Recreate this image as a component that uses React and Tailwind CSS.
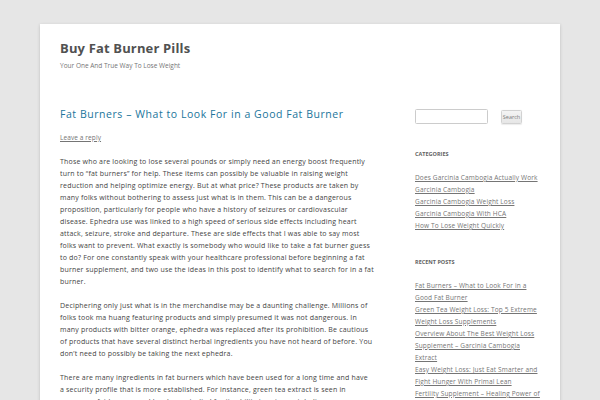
export default function App() {
  const categories = [
    "Does Garcinia Cambogia Actually Work",
    "Garcinia Cambogia",
    "Garcinia Cambogia Weight Loss",
    "Garcinia Cambogia With HCA",
    "How To Lose Weight Quickly",
  ];
  const recent = [
    ["Fat Burners – What to Look For in a Good Fat Burner"],
    ["Green Tea Weight Loss: Top 5 Extreme Weight Loss Supplements"],
    ["Overview About The Best Weight Loss Supplement – Garcinia Cambogia", "Extract"],
    ["Easy Weight Loss: Just Eat Smarter and Fight Hunger With Primal Lean"],
    ["Fertility Supplement – Healing Power of Maca Root"],
  ];
  return (
    <div className="min-h-screen bg-[#e6e6e6] pt-6 font-['Open_Sans',sans-serif] text-[#444]">
      <div className="mx-10 min-h-[376px] bg-white px-5 shadow-[0_1px_3px_rgba(100,100,100,0.3)]">
        <header className="py-3">
          <h1 className="text-[13px] font-bold leading-6 tracking-[0.15px] text-[#515151]">Buy Fat Burner Pills</h1>
          <h2 className="text-[6.5px] leading-3 text-[#757575]">Your One And True Way To Lose Weight</h2>
        </header>
        <div className="mt-6 flex justify-between">
          <main className="w-[315px]">
            <div className="mb-3">
              <h1 className="text-[10.5px] leading-3 tracking-[0.55px] text-[#21759b]">
                Fat Burners – What to Look For in a Good Fat Burner
              </h1>
              <div className="mt-3 text-[6.5px] leading-3 tracking-[0.1px] text-[#757575] underline">Leave a reply</div>
            </div>
            <div className="text-[7px] leading-3 tracking-[0.19px]">
              <p className="mb-3">
                Those who are looking to lose several pounds or simply need an energy boost frequently turn to “fat burners” for help. These items can possibly be valuable in raising weight reduction and helping optimize energy. But at what price? These products are taken by many folks without bothering to assess just what is in them. This can be a dangerous proposition, particularly for people who have a history of seizures or cardiovascular disease. Ephedra use was linked to a high speed of serious side effects including heart attack, seizure, stroke and departure. These are side effects that I was able to say most folks want to prevent. What exactly is somebody who would like to take a fat burner guess to do? For one constantly speak with your healthcare professional before beginning a fat burner supplement, and two use the ideas in this post to identify what to search for in a fat burner.
              </p>
              <p className="mb-3">
                Deciphering only just what is in the merchandise may be a daunting challenge. Millions of folks took ma huang featuring products and simply presumed it was not dangerous. In many products with bitter orange, ephedra was replaced after its prohibition. Be cautious of products that have several distinct herbal ingredients you have not heard of before. You don’t need to possibly be taking the next ephedra.
              </p>
              <p className="mb-3 mr-[3px]">
                There are many ingredients in fat burners which have been used for a long time and have a security profile that is more established. For instance, green tea extract is seen in numerous fat burners and has been studied for its ability to raise metabolism.
              </p>
            </div>
          </main>
          <aside className="w-[125px]">
            <div className="mb-6 flex h-4 items-start">
              <div className="mt-px h-[15px] w-[73px] rounded-[1.5px] border border-[#ccc] bg-white" />
              <div className="ml-[13px] mt-[2px] flex h-[14px] w-[21px] items-center justify-center rounded-[1.5px] border border-[#d2d2d2] bg-gradient-to-b from-[#f4f4f4] to-[#e6e6e6] text-[5.5px] text-[#7c7c7c] shadow-[0_0.5px_1px_rgba(64,64,64,0.1)]">
                Search
              </div>
            </div>
            <div className="mb-6">
              <h3 className="mb-3 text-[5.5px] font-bold uppercase leading-3 text-[#636363]">Categories</h3>
              <ul className="text-[6.5px] leading-3 tracking-[0.15px] text-[#757575]">
                {categories.map((c) => (
                  <li key={c} className="underline">{c}</li>
                ))}
              </ul>
            </div>
            <div>
              <h3 className="mb-3 text-[5.5px] font-bold uppercase leading-3 text-[#636363]">Recent Posts</h3>
              <ul className="text-[6.5px] leading-3 tracking-[0.15px] text-[#757575]">
                {recent.map((lines) => (
                  <li key={lines[0]} className="underline">
                    {lines.map((l, i) => (
                      <span key={i}>
                        {i > 0 && <br />}
                        {l}
                      </span>
                    ))}
                  </li>
                ))}
              </ul>
            </div>
          </aside>
        </div>
      </div>
    </div>
  );
}
